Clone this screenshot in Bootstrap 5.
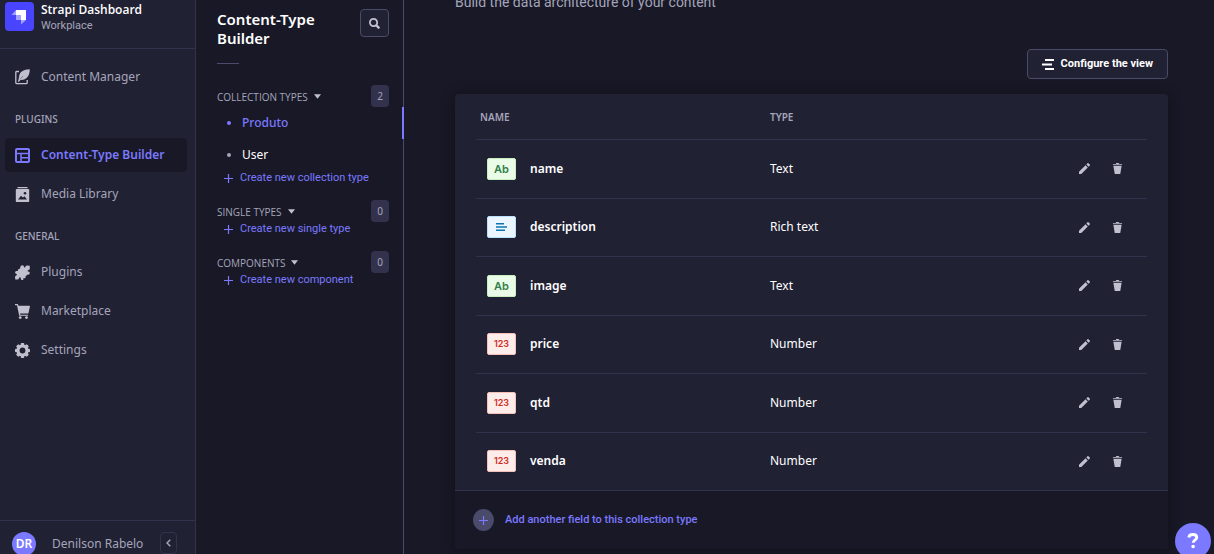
<!DOCTYPE html>
<html lang="en" data-bs-theme="dark">
<head>
<meta charset="utf-8">
<meta name="viewport" content="width=device-width, initial-scale=1">
<title>Content-Type Builder</title>
<link href="https://cdn.jsdelivr.net/npm/bootstrap@5.3.0/dist/css/bootstrap.min.css" rel="stylesheet">
<style>
  :root { --bg:#181826; --panel:#212134; --line:#32324d; --edge:#4a4a6a; --muted:#a5a5ba; --glyph:#c0c0cf; --accent:#7b79ff; }
  body { background:var(--bg); color:#fff; font-family:"Noto Sans","Open Sans",sans-serif; font-size:12px; line-height:16px; }
  a { color:inherit; text-decoration:none; }
  svg { display:block; flex:none; }

  .app-nav { width:196px; background:var(--panel); border-right:1px solid var(--line); color:var(--muted); }
  .brand { height:49px; padding:2px 5px 0; gap:7px; border-bottom:1px solid var(--line); }
  .brand svg { border-radius:4px; }
  .brand-name { font-family:"Open Sans",sans-serif; font-weight:600; color:#fff; }
  .brand-sub { font-size:11px; font-family:Roboto,sans-serif; }
  .side-menu { padding:11px 8px 0 5px; }
  .side-link { height:34px; padding:0 10px; gap:11px; margin-bottom:5px; border-radius:4px; }
  .side-link svg { color:var(--glyph); }
  .side-link.current { background:var(--bg); color:var(--accent); font-weight:600; }
  .side-link.current svg { color:var(--accent); }
  .side-title { font-size:10px; font-weight:500; color:var(--muted); padding:0 10px; margin:17px 0 11px; line-height:16px; text-transform:uppercase; }
  .user-bar { border-top:1px solid var(--line); padding:11px 18px 0 12px; height:52px; margin-bottom:-18px; }
  .avatar { width:24px; height:24px; background:var(--accent); color:#fff; font-weight:600; font-size:12px; }
  .collapse-btn { width:17px; height:22px; border:1px solid var(--line); border-radius:4px; background:var(--panel); color:var(--muted); }

  .sub-nav { width:208px; border-right:1px solid var(--edge); padding-top:9px; }
  .sub-head, .group-head { padding:0 14px 0 21px; }
  .sub-head h1 { font-size:15px; line-height:19px; font-weight:600; margin:1px 0 0; color:#fff; }
  .search-btn { width:29px; height:28px; border:1px solid var(--edge); border-radius:4px; background:var(--panel); color:var(--glyph); }
  .rule { width:22px; height:1px; background:var(--edge); margin:15px 0 21px 21px; }
  .group-head { height:22px; }
  .group-head button { font-family:"Open Sans",sans-serif; font-size:10px; font-weight:500; color:var(--muted); text-transform:uppercase; gap:6px; padding:2px 0 0; }
  .group-head button svg { color:var(--glyph); margin-bottom:2px; }
  .count { width:18px; height:22px; border-radius:4px; background:var(--line); color:var(--muted); font-size:10px; }
  .type-link { height:32px; padding-left:31px; gap:11px; margin-right:-1px; }
  .type-link::before { content:""; width:4px; height:4px; border-radius:50%; background:var(--muted); }
  .type-link.current { color:var(--accent); font-weight:500; border-right:2px solid var(--accent); }
  .type-link.current::before { background:var(--accent); }
  .create { height:14px; padding-left:28px; gap:7px; margin-bottom:15px; color:var(--accent); font-family:Roboto,sans-serif; font-size:11px; }

  .content-pane { padding:0 46px 0 51px; }
  .lede { font-family:Roboto,sans-serif; font-size:14px; line-height:20px; color:var(--muted); margin:-8px 0 37px; }
  .config-btn { height:30px; padding:0 14px; gap:6px; border:1px solid var(--edge); border-radius:4px; background:var(--panel); color:#fff; font-family:Roboto,sans-serif; font-size:11px; font-weight:700; margin-bottom:15px; }
  .fields { background:var(--panel); border-radius:4px; box-shadow:0 2px 15px rgba(0,0,0,.3); }
  .table-wrap { padding:0 21px; }
  .field-table { height:396px; table-layout:fixed; border-collapse:separate; border-spacing:0; width:100%; }
  .field-table th { height:45px; font-size:10px; font-weight:600; color:var(--muted); padding:0 4px; }
  .field-table td { padding:0 4px; border-top:1px solid var(--line); vertical-align:middle; }
  .col-name { width:290px; }
  .col-tools { width:90px; }
  .field-name { font-weight:600; gap:14px; padding-left:7px; }
  .kind { width:29px; height:22px; border:1px solid; border-radius:2px; font:600 11px/20px Inter,sans-serif; }
  .kind-text { background:#eafbe7; border-color:#c6f0c2; color:#328048; }
  .kind-rich { background:#eaf5ff; border-color:#b8e1ff; color:#0c75af; }
  .kind-num { background:#fcecea; border-color:#f5c0b8; color:#d02b20; font-size:9px; }
  .tools { gap:22px; padding-right:20px; }
  .tools button { color:var(--glyph); }
  .add-field { height:59px; padding:0 18px; gap:11px; border:0; border-top:1px solid var(--line); border-radius:0 0 4px 4px; background:var(--bg); color:var(--accent); font-family:Roboto,sans-serif; font-size:11px; font-weight:500; }
  .add-dot { width:21px; height:22px; background:var(--edge); }
  .help-btn { right:3px; bottom:-5px; width:36px; height:36px; background:var(--accent); color:#fff; z-index:5; }
</style>
</head>
<body>
<svg class="d-none" xmlns="http://www.w3.org/2000/svg">
  <symbol id="pencil" viewBox="0 0 24 24"><path fill="currentColor" d="M23.604 3.514c.528.528.528 1.36 0 1.887l-2.622 2.607-4.99-4.99L18.6.396a1.322 1.322 0 011.887 0l3.118 3.118zM0 24v-4.99l14.2-14.2 4.99 4.99L4.99 24H0z"/></symbol>
  <symbol id="trash" viewBox="0 0 24 24"><path fill="currentColor" d="M3.236 6.149a.2.2 0 00-.197.233L6 24h12l2.96-17.618a.2.2 0 00-.196-.233H3.236zM21.8 1.983c.11 0 .2.09.2.2v1.584a.2.2 0 01-.2.2H2.2a.2.2 0 01-.2-.2V2.183c0-.11.09-.2.2-.2h5.511c.9 0 1.631-1.09 1.631-1.983h5.316c0 .894.73 1.983 1.631 1.983H21.8z"/></symbol>
  <symbol id="plus" viewBox="0 0 9 9"><path stroke="currentColor" stroke-width="1.200" d="M4.500 0v9M0 4.500h9"/></symbol>
  <symbol id="caret" viewBox="0 0 6 4"><path fill="currentColor" d="M0 0h6L3 4z"/></symbol>
</svg>

<div class="d-flex vh-100 overflow-hidden position-relative">
  <nav class="app-nav d-flex flex-column flex-shrink-0" aria-label="Main">
    <div class="brand d-flex">
      <svg width="29" height="29" viewBox="0 0 29 29"><rect width="29" height="29" fill="#4945ff"/><path fill="#fff" d="M11 8h10v10h-5v-5h-5z"/><path fill="#a4a2ff" d="M11 8v5H6.500zM16 18h5l-5 4.500z"/><path fill="#a4a2ff" d="M11 13h5v5h-5z"/></svg>
      <div>
        <div class="brand-name">Strapi Dashboard</div>
        <div class="brand-sub">Workplace</div>
      </div>
    </div>
    <div class="side-menu flex-grow-1">
      <a href="#" class="side-link d-flex align-items-center"><svg width="15" height="16" viewBox="0 0 15 16"><path fill="none" stroke="currentColor" stroke-width="1.300" d="M4 2.500H1.600Q.8 2.500.8 3.300v10.200q0 1.200 1.200 1.200h9q1.200 0 1.200-1.200V11"/><path fill="currentColor" d="M14.800.3C8.500.3 4.300 3 4 8.200L3 12.600l.9.4 1.500-1.900C11.300 11.500 14.800 7 14.800.3z"/><path stroke="#212134" stroke-width=".4" d="M5 10.500l3-3.500"/></svg>Content Manager</a>
      <h2 class="side-title">Plugins</h2>
      <a href="#" class="side-link current d-flex align-items-center" aria-current="page"><svg width="15" height="15" viewBox="0 0 15 15"><path fill="none" stroke="currentColor" stroke-width="2" d="M1 2q0-1 1-1h11q1 0 1 1v11q0 1-1 1H2q-1 0-1-1z"/><path stroke="currentColor" stroke-width="1.500" d="M1 5.500h13M6 5.500V14M6 9.800h8"/></svg>Content-Type Builder</a>
      <a href="#" class="side-link d-flex align-items-center"><svg width="15" height="15" viewBox="0 0 15 15"><path fill="currentColor" d="M2.500 0h10v1.200h-10zM1.500 2h12q.7 0 .7.700v11.500q0 .8-.7.8h-12q-.7 0-.7-.8V2.700q0-.7.700-.7z"/><path fill="#212134" d="M3 12.500l3-3.700 2 1.700 1.500-1.200 2.500 3.200z"/><circle cx="10" cy="6.300" r="1.300" fill="#212134"/></svg>Media Library</a>
      <h2 class="side-title">General</h2>
      <a href="#" class="side-link d-flex align-items-center"><svg width="15" height="15" viewBox="0 0 15 15"><path fill="currentColor" d="M5.400 1.800Q5.600.2 7.300.2q2 .2 1.700 2.300.9.300 1.300-.4.100-1.600 1.600-1.700L14.700.8l.1 3.300q-.5 1.100-1.700 1.100-.9.600-.2 1.400 1.700-.3 1.900 1.400-.2 2-2.300 1.600-.3 1.200-1.300 1-1 .2-.5 1.300-.1 1.700-1.900 1.200-.7.500-.5 2Q5.800 15.300 5.700 13.500q.2-1-.6-1.300-1.100 0-1.100 1.100-.3 1.400-1.700 1.300L.3 14.400 0 12.200q.1-1.600 1.400-1.700.8-.6.100-1.400Q0 8.900.1 7.300.4 5.500 2.400 6q.7-.1.600-1.200.2-1 1.400-.8.900-.1 1-2.200z"/></svg>Plugins</a>
      <a href="#" class="side-link d-flex align-items-center"><svg width="15" height="15" viewBox="0 0 15 15"><path fill="currentColor" d="M0 0h2.300q.7 0 .9.800l.2.900h10.900q.8 0 .6.800l-1.300 6.200q-.2.800-1 .8H5l.3 1.200h7.700v1H4.200L2 1.300H0z"/><circle cx="5.200" cy="13.600" r="1.400" fill="currentColor"/><circle cx="11.500" cy="13.600" r="1.400" fill="currentColor"/></svg>Marketplace</a>
      <a href="#" class="side-link d-flex align-items-center"><svg width="15" height="15" viewBox="0 0 15 15"><g fill="currentColor"><rect x="5.700" width="3.600" height="15" rx="1"/><rect x="5.700" width="3.600" height="15" rx="1" transform="rotate(45 7.500 7.500)"/><rect x="5.700" width="3.600" height="15" rx="1" transform="rotate(90 7.500 7.500)"/><rect x="5.700" width="3.600" height="15" rx="1" transform="rotate(135 7.500 7.500)"/><circle cx="7.500" cy="7.500" r="6"/></g><circle cx="7.500" cy="7.500" r="2.900" fill="#212134"/></svg>Settings</a>
    </div>
    <div class="user-bar d-flex align-items-start">
      <span class="avatar rounded-circle d-flex align-items-center justify-content-center me-3">DR</span>
      <span class="pt-1 flex-grow-1 text-nowrap">Denilson Rabelo</span>
      <button class="collapse-btn p-0 d-flex align-items-center justify-content-center" aria-label="Collapse menu"><svg width="5" height="8" viewBox="0 0 5 8"><path fill="none" stroke="currentColor" stroke-width="1.500" d="M4.300.7L1 4l3.300 3.300"/></svg></button>
    </div>
  </nav>

  <nav class="sub-nav flex-shrink-0" aria-label="Content types">
    <div class="sub-head d-flex justify-content-between align-items-start">
      <h1>Content-Type<br>Builder</h1>
      <button class="search-btn p-0 d-flex align-items-center justify-content-center" aria-label="Search"><svg width="11" height="11" viewBox="0 0 24 24"><path fill="currentColor" d="M23.813 20.163l-5.3-5.367a9.792 9.792 0 001.312-4.867C19.825 4.455 15.375 0 9.913 0 4.450 0 0 4.455 0 9.929c0 5.473 4.450 9.928 9.912 9.928a9.757 9.757 0 005.007-1.400l5.275 5.350a.634.634 0 00.913 0l2.706-2.737a.641.641 0 000-.907zM9.910 3.867c3.338 0 6.050 2.718 6.050 6.061s-2.712 6.061-6.050 6.061c-3.337 0-6.050-2.718-6.050-6.060 0-3.344 2.713-6.062 6.050-6.062z"/></svg></button>
    </div>
    <div class="rule"></div>
    <div class="group-head d-flex align-items-center justify-content-between"><button class="bg-transparent border-0 d-flex align-items-center">Collection types <svg width="7" height="5"><use href="#caret"/></svg></button><span class="count d-flex align-items-center justify-content-center">2</span></div>
    <a href="#" class="type-link current d-flex align-items-center">Produto</a>
    <a href="#" class="type-link d-flex align-items-center">User</a>
    <a href="#" class="create d-flex align-items-center"><svg width="9" height="9"><use href="#plus"/></svg>Create new collection type</a>
    <div class="group-head d-flex align-items-center justify-content-between"><button class="bg-transparent border-0 d-flex align-items-center">Single types <svg width="7" height="5"><use href="#caret"/></svg></button><span class="count d-flex align-items-center justify-content-center">0</span></div>
    <a href="#" class="create d-flex align-items-center"><svg width="9" height="9"><use href="#plus"/></svg>Create new single type</a>
    <div class="group-head d-flex align-items-center justify-content-between"><button class="bg-transparent border-0 d-flex align-items-center">Components <svg width="7" height="5"><use href="#caret"/></svg></button><span class="count d-flex align-items-center justify-content-center">0</span></div>
    <a href="#" class="create d-flex align-items-center"><svg width="9" height="9"><use href="#plus"/></svg>Create new component</a>
  </nav>

  <main class="content-pane flex-grow-1">
    <p class="lede">Build the data architecture of your content</p>
    <button class="config-btn d-flex align-items-center ms-auto"><svg width="13" height="11" viewBox="0 0 13 11"><path fill="currentColor" d="M3 0h9v2H3zM0 4.500h10v2H0zM3 9h9v2H3z"/></svg>Configure the view</button>
    <section class="fields">
      <div class="table-wrap">
        <table class="field-table">
          <colgroup><col class="col-name"><col><col class="col-tools"></colgroup>
          <thead><tr><th scope="col">NAME</th><th scope="col">TYPE</th><th aria-label="Actions"></th></tr></thead>
          <tbody>
            <tr><td><div class="field-name d-flex align-items-center"><span class="kind kind-text text-center">Ab</span>name</div></td><td>Text</td><td><div class="tools d-flex justify-content-end"><button class="btn p-0 border-0" aria-label="Edit name"><svg width="11" height="11"><use href="#pencil"/></svg></button><button class="btn p-0 border-0" aria-label="Delete name"><svg width="11" height="11"><use href="#trash"/></svg></button></div></td></tr>
            <tr><td><div class="field-name d-flex align-items-center"><span class="kind kind-rich d-flex align-items-center justify-content-center"><svg width="11" height="8" viewBox="0 0 11 8"><path stroke="currentColor" stroke-width="1.500" d="M0 .8h8M0 4h11M0 7.200h9"/></svg></span>description</div></td><td>Rich text</td><td><div class="tools d-flex justify-content-end"><button class="btn p-0 border-0" aria-label="Edit description"><svg width="11" height="11"><use href="#pencil"/></svg></button><button class="btn p-0 border-0" aria-label="Delete description"><svg width="11" height="11"><use href="#trash"/></svg></button></div></td></tr>
            <tr><td><div class="field-name d-flex align-items-center"><span class="kind kind-text text-center">Ab</span>image</div></td><td>Text</td><td><div class="tools d-flex justify-content-end"><button class="btn p-0 border-0" aria-label="Edit image"><svg width="11" height="11"><use href="#pencil"/></svg></button><button class="btn p-0 border-0" aria-label="Delete image"><svg width="11" height="11"><use href="#trash"/></svg></button></div></td></tr>
            <tr><td><div class="field-name d-flex align-items-center"><span class="kind kind-num text-center">123</span>price</div></td><td>Number</td><td><div class="tools d-flex justify-content-end"><button class="btn p-0 border-0" aria-label="Edit price"><svg width="11" height="11"><use href="#pencil"/></svg></button><button class="btn p-0 border-0" aria-label="Delete price"><svg width="11" height="11"><use href="#trash"/></svg></button></div></td></tr>
            <tr><td><div class="field-name d-flex align-items-center"><span class="kind kind-num text-center">123</span>qtd</div></td><td>Number</td><td><div class="tools d-flex justify-content-end"><button class="btn p-0 border-0" aria-label="Edit qtd"><svg width="11" height="11"><use href="#pencil"/></svg></button><button class="btn p-0 border-0" aria-label="Delete qtd"><svg width="11" height="11"><use href="#trash"/></svg></button></div></td></tr>
            <tr><td><div class="field-name d-flex align-items-center"><span class="kind kind-num text-center">123</span>venda</div></td><td>Number</td><td><div class="tools d-flex justify-content-end"><button class="btn p-0 border-0" aria-label="Edit venda"><svg width="11" height="11"><use href="#pencil"/></svg></button><button class="btn p-0 border-0" aria-label="Delete venda"><svg width="11" height="11"><use href="#trash"/></svg></button></div></td></tr>
          </tbody>
        </table>
      </div>
      <button class="add-field d-flex align-items-center w-100"><span class="add-dot rounded-circle d-flex align-items-center justify-content-center"><svg width="9" height="9"><use href="#plus"/></svg></span>Add another field to this collection type</button>
    </section>
  </main>

  <button class="help-btn position-absolute rounded-circle border-0 p-0 d-flex align-items-center justify-content-center" aria-label="Help"><svg width="12" height="16" viewBox="0 0 12 16"><path fill="none" stroke="currentColor" stroke-width="2.800" d="M1.800 4.500C2 2.500 3.800 1.500 5.800 1.500s4 1 4 3c0 2.500-3.600 2.300-3.600 5.300"/><circle cx="6.100" cy="13.500" r="1.800" fill="currentColor"/></svg></button>
</div>
<script src="https://cdn.jsdelivr.net/npm/bootstrap@5.3.0/dist/js/bootstrap.bundle.min.js"></script>
</body>
</html>
